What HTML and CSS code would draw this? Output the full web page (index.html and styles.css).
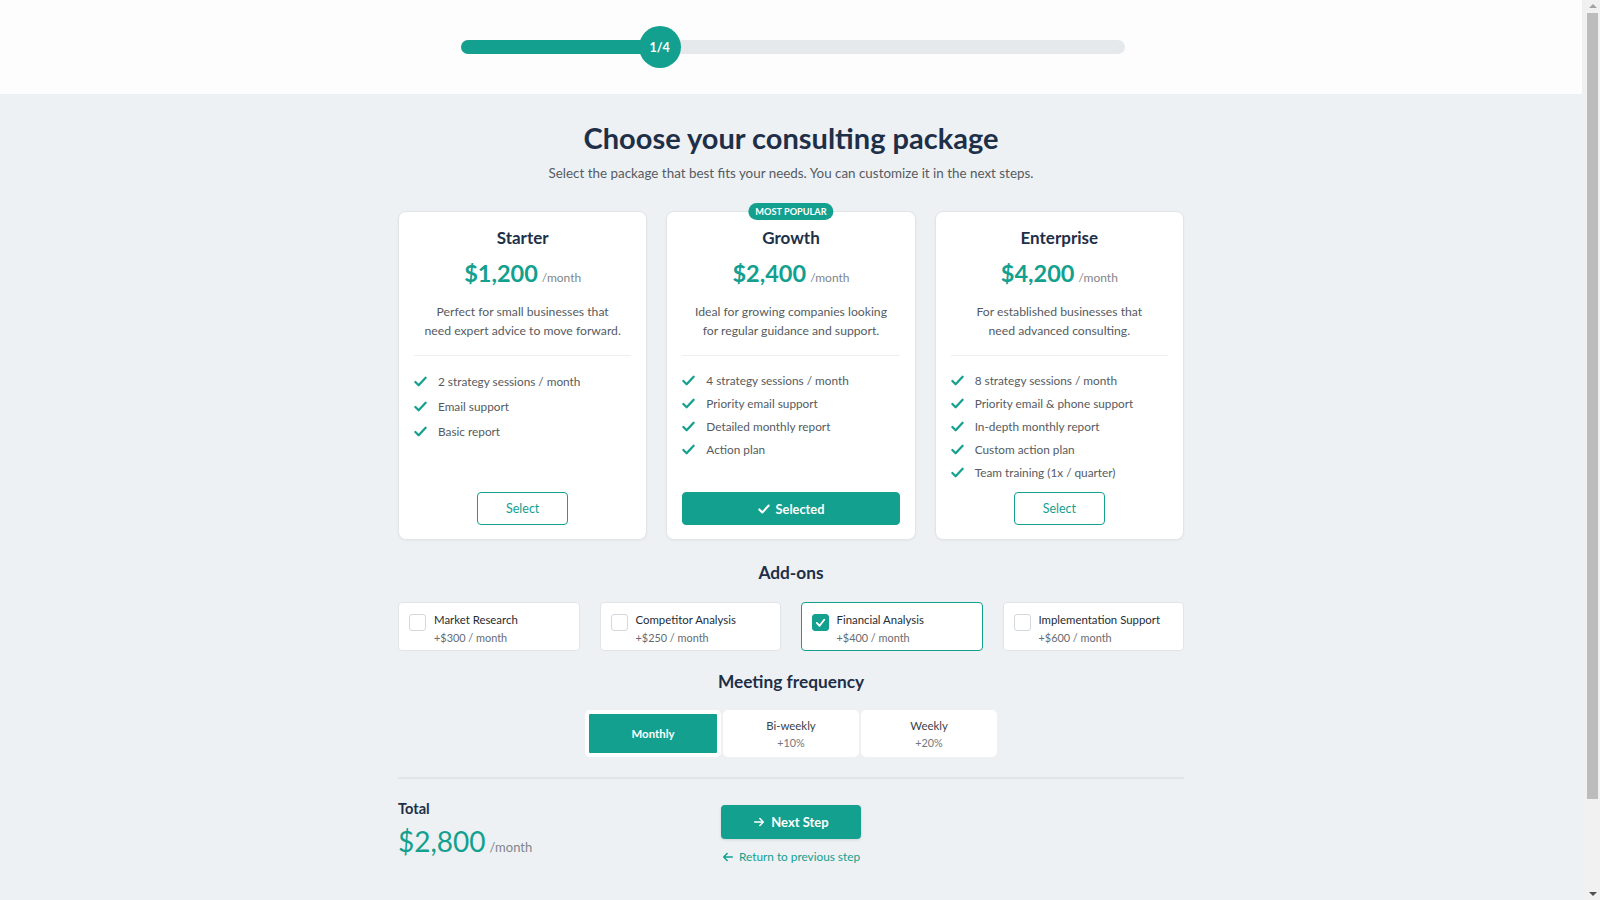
FILE: index.html
```html
<!DOCTYPE html>
<html lang="en">
<head>
    <meta charset="UTF-8">
    <meta name="viewport" content="width=device-width, initial-scale=1.0">
    <title>Choose your consulting package</title>
    <link rel="stylesheet" href="styles.css">
</head>
<body>
    <header class="topbar">
        <div class="progress">
            <div class="progress-fill" style="width: 30%"></div>
            <div class="progress-step" style="left: 30%">1/4</div>
        </div>
    </header>

    <main class="page">
        <div class="container">
            <h1 class="title">Choose your consulting package</h1>
            <p class="subtitle">Select the package that best fits your needs. You can customize it in the next steps.</p>

            <div class="plans">
                <div class="plan">
                    <h3 class="plan-name">Starter</h3>
                    <div class="plan-price">$1,200<span>/month</span></div>
                    <p class="plan-desc">Perfect for small businesses that<br>need expert advice to move forward.</p>
                    <ul class="features features-loose">
                        <li><svg viewBox="0 0 14 14"><polyline points="1.5,7.5 5,11 12.5,3"/></svg>2 strategy sessions / month</li>
                        <li><svg viewBox="0 0 14 14"><polyline points="1.5,7.5 5,11 12.5,3"/></svg>Email support</li>
                        <li><svg viewBox="0 0 14 14"><polyline points="1.5,7.5 5,11 12.5,3"/></svg>Basic report</li>
                    </ul>
                    <button class="plan-btn">Select</button>
                </div>

                <div class="plan plan-popular">
                    <span class="badge">Most popular</span>
                    <h3 class="plan-name">Growth</h3>
                    <div class="plan-price">$2,400<span>/month</span></div>
                    <p class="plan-desc">Ideal for growing companies looking<br>for regular guidance and support.</p>
                    <ul class="features">
                        <li><svg viewBox="0 0 14 14"><polyline points="1.5,7.5 5,11 12.5,3"/></svg>4 strategy sessions / month</li>
                        <li><svg viewBox="0 0 14 14"><polyline points="1.5,7.5 5,11 12.5,3"/></svg>Priority email support</li>
                        <li><svg viewBox="0 0 14 14"><polyline points="1.5,7.5 5,11 12.5,3"/></svg>Detailed monthly report</li>
                        <li><svg viewBox="0 0 14 14"><polyline points="1.5,7.5 5,11 12.5,3"/></svg>Action plan</li>
                    </ul>
                    <button class="plan-btn selected"><svg viewBox="0 0 14 14"><polyline points="1.5,7.5 5,11 12.5,3"/></svg>Selected</button>
                </div>

                <div class="plan">
                    <h3 class="plan-name">Enterprise</h3>
                    <div class="plan-price">$4,200<span>/month</span></div>
                    <p class="plan-desc">For established businesses that<br>need advanced consulting.</p>
                    <ul class="features">
                        <li><svg viewBox="0 0 14 14"><polyline points="1.5,7.5 5,11 12.5,3"/></svg>8 strategy sessions / month</li>
                        <li><svg viewBox="0 0 14 14"><polyline points="1.5,7.5 5,11 12.5,3"/></svg>Priority email &amp; phone support</li>
                        <li><svg viewBox="0 0 14 14"><polyline points="1.5,7.5 5,11 12.5,3"/></svg>In-depth monthly report</li>
                        <li><svg viewBox="0 0 14 14"><polyline points="1.5,7.5 5,11 12.5,3"/></svg>Custom action plan</li>
                        <li><svg viewBox="0 0 14 14"><polyline points="1.5,7.5 5,11 12.5,3"/></svg>Team training (1x / quarter)</li>
                    </ul>
                    <button class="plan-btn">Select</button>
                </div>
            </div>

            <h2 class="section-title">Add-ons</h2>
            <div class="addons">
                <label class="addon">
                    <span class="checkbox"></span>
                    <span class="addon-text"><strong>Market Research</strong><small>+$300 / month</small></span>
                </label>
                <label class="addon">
                    <span class="checkbox"></span>
                    <span class="addon-text"><strong>Competitor Analysis</strong><small>+$250 / month</small></span>
                </label>
                <label class="addon checked">
                    <span class="checkbox"><svg viewBox="0 0 14 14"><polyline points="3,7.5 6,10.5 11,4"/></svg></span>
                    <span class="addon-text"><strong>Financial Analysis</strong><small>+$400 / month</small></span>
                </label>
                <label class="addon">
                    <span class="checkbox"></span>
                    <span class="addon-text"><strong>Implementation Support</strong><small>+$600 / month</small></span>
                </label>
            </div>

            <h2 class="section-title">Meeting frequency</h2>
            <div class="frequency">
                <div class="segmented">
                    <button class="segment active">Monthly</button>
                    <button class="segment">Bi-weekly<small>+10%</small></button>
                    <button class="segment">Weekly<small>+20%</small></button>
                </div>
            </div>

            <div class="summary">
                <div class="total">
                    <div class="total-label">Total</div>
                    <div class="total-price">$2,800<span>/month</span></div>
                </div>
                <div class="actions">
                    <button class="next-btn"><svg viewBox="0 0 14 14"><path d="M2 7h10M8 3l4 4-4 4"/></svg>Next Step</button>
                    <a href="#" class="back-link"><svg viewBox="0 0 14 14"><path d="M12 7H2M6 3L2 7l4 4"/></svg>Return to previous step</a>
                </div>
                <div></div>
            </div>
        </div>
    </main>

    <!-- window scrollbar, drawn because the headless view hides it -->
    <div class="scrollbar">
        <span class="scroll-arrow up"></span>
        <div class="scroll-thumb"></div>
        <span class="scroll-arrow down"></span>
    </div>
</body>
</html>
```

FILE: styles.css
```css
html {
    background: #eef1f4;
}

body {
    font-family: 'Lato', 'Open Sans', sans-serif;
    margin: 0 18px 0 0;
    background: #eef1f4;
    color: #333;
}

/* fake window scrollbar */
.scrollbar {
    position: fixed;
    top: 0;
    right: 0;
    bottom: 0;
    width: 15px;
    background: #f1f1f1;
    display: flex;
    flex-direction: column;
    align-items: center;
}

.scroll-arrow {
    width: 0;
    height: 0;
    margin: 4px 0;
    border-left: 4px solid transparent;
    border-right: 4px solid transparent;
}

.scroll-arrow.up {
    border-bottom: 4px solid #a3a3a3;
}

.scroll-arrow.down {
    margin-top: auto;
    border-top: 4px solid #505050;
}

.scroll-thumb {
    width: 11px;
    height: 786px;
    margin-top: 1px;
    background: #bcbcbc;
}

/* top progress */
.topbar {
    height: 94px;
    margin-right: -3px;
    background: #fdfdfe;
    display: flex;
    justify-content: center;
    align-items: center;
}

.progress {
    position: relative;
    width: 664px;
    height: 14px;
    border-radius: 7px;
    background: #e6e9ec;
}

.progress-fill {
    height: 100%;
    border-radius: 7px;
    background: #13a08f;
}

.progress-step {
    position: absolute;
    top: 50%;
    width: 42px;
    height: 42px;
    border-radius: 50%;
    background: #13a08f;
    color: #fff;
    font-size: 12.5px;
    font-weight: 700;
    display: flex;
    align-items: center;
    justify-content: center;
    transform: translate(-50%, -50%);
}

.page {
    padding: 26px 0 135px;
}

.container {
    width: 786px;
    margin: 0 auto;
}

.title {
    margin: 0;
    font-size: 29px;
    line-height: 36px;
    font-weight: 700;
    text-align: center;
    color: #1e2f48;
}

.subtitle {
    margin: 7px 0 0;
    font-size: 13.4px;
    line-height: 20px;
    text-align: center;
    color: #555b61;
}

/* plans */
.plans {
    display: grid;
    grid-template-columns: repeat(3, 1fr);
    gap: 19px;
    margin-top: 28px;
}

.plan {
    position: relative;
    display: flex;
    flex-direction: column;
    background: #fff;
    border: 1px solid #e1e5e9;
    border-radius: 8px;
    padding: 14px 15px 14px;
    box-shadow: 0 1px 3px rgba(0, 0, 0, 0.04);
    text-align: center;
}

.badge {
    position: absolute;
    top: -9px;
    left: 50%;
    transform: translateX(-50%);
    height: 17px;
    line-height: 17px;
    padding: 0 7px;
    border-radius: 9px;
    background: #13a08f;
    color: #fff;
    font-size: 9.2px;
    font-weight: 700;
    text-transform: uppercase;
    white-space: nowrap;
}

.plan-name {
    margin: 0;
    font-size: 17px;
    line-height: 24px;
    font-weight: 700;
    color: #1e2f48;
}

.plan-price {
    margin-top: 8px;
    font-size: 23.5px;
    line-height: 30px;
    font-weight: 700;
    color: #13a08f;
}

.plan-price span,
.total-price span {
    margin-left: 4px;
    font-size: 12px;
    font-weight: 400;
    color: #80868c;
}

.plan-desc {
    margin: 10px 0 0;
    padding-bottom: 15px;
    border-bottom: 1px solid #eceff1;
    font-size: 12.2px;
    line-height: 18.5px;
    color: #555b61;
}

.features {
    list-style: none;
    margin: 13px 0 8px;
    padding: 0;
    text-align: left;
}

.features li {
    display: flex;
    align-items: center;
    gap: 11px;
    height: 23px;
    font-size: 11.8px;
    color: #555b61;
}

.features-loose li {
    height: 25px;
}

.features svg,
.plan-btn svg {
    width: 13px;
    height: 13px;
    fill: none;
    stroke: #13a08f;
    stroke-width: 2.4;
    stroke-linecap: round;
    stroke-linejoin: round;
    flex-shrink: 0;
}

.plan-btn {
    margin-top: auto;
    align-self: center;
    height: 33px;
    padding: 0 28px;
    border: 1.5px solid #13a08f;
    border-radius: 4px;
    background: #fff;
    color: #13a08f;
    font-family: inherit;
    font-size: 12.5px;
    cursor: pointer;
}

.plan-btn.selected {
    align-self: stretch;
    display: flex;
    align-items: center;
    justify-content: center;
    gap: 6px;
    background: #13a08f;
    color: #fff;
    font-size: 12.8px;
    font-weight: 700;
}

.plan-btn.selected svg {
    stroke: #fff;
    width: 12px;
    height: 12px;
}

/* add-ons */
.section-title {
    margin: 21px 0 0;
    font-size: 17.3px;
    line-height: 24px;
    font-weight: 700;
    text-align: center;
    color: #1e2f48;
}

.addons + .section-title {
    margin-top: 19px;
}

.addons {
    display: grid;
    grid-template-columns: repeat(4, 1fr);
    gap: 20px;
    margin-top: 17px;
}

.addon {
    display: flex;
    align-items: flex-start;
    gap: 8px;
    height: 49px;
    box-sizing: border-box;
    padding: 8px 10px 0;
    background: #fff;
    border: 1px solid #e1e5e9;
    border-radius: 4px;
    cursor: pointer;
}

.addon.checked {
    border: 1.5px solid #13a08f;
    padding: 7.5px 9.5px 0;
}

.checkbox {
    width: 17px;
    height: 17px;
    margin-top: 3px;
    box-sizing: border-box;
    border: 1.5px solid #d3d8dd;
    border-radius: 3px;
    background: #fff;
    flex-shrink: 0;
    display: flex;
    align-items: center;
    justify-content: center;
}

.addon.checked .checkbox {
    border-color: #13a08f;
    background: #13a08f;
}

.checkbox svg {
    width: 13px;
    height: 13px;
    fill: none;
    stroke: #fff;
    stroke-width: 2;
    stroke-linecap: round;
    stroke-linejoin: round;
}

.addon-text strong {
    display: block;
    font-size: 11.4px;
    line-height: 17px;
    font-weight: 400;
    color: #252c33;
}

.addon-text small {
    display: block;
    margin-top: 1px;
    font-size: 10.9px;
    line-height: 17px;
    color: #666c72;
}

/* frequency */
.frequency {
    display: flex;
    justify-content: center;
    margin-top: 16px;
}

.segmented {
    display: flex;
    gap: 2px;
    border-radius: 5px;
    background: #eef1f4;
}

.segment {
    width: 136px;
    height: 47px;
    border: 4px solid #fff;
    border-radius: 5px;
    background: #fff;
    color: #3c434a;
    font-family: inherit;
    font-size: 11.4px;
    line-height: 17px;
    cursor: pointer;
}

.segment small {
    display: block;
    font-size: 10.8px;
    color: #71777d;
}

.segment.active {
    background: #13a08f;
    color: #fff;
    font-weight: 700;
}

/* summary */
.summary {
    display: grid;
    grid-template-columns: 1fr auto 1fr;
    margin-top: 20px;
    padding-top: 21px;
    border-top: 2px solid #e1e5e9;
}

.total-label {
    font-size: 14.6px;
    line-height: 18px;
    font-weight: 700;
    color: #1e2f48;
}

.total-price {
    margin-top: 5px;
    font-size: 28px;
    line-height: 36px;
    color: #13a08f;
}

.total-price span {
    font-size: 13px;
}

.actions {
    display: flex;
    flex-direction: column;
    align-items: center;
    padding-top: 5px;
}

.next-btn {
    display: flex;
    align-items: center;
    justify-content: center;
    gap: 6px;
    width: 140px;
    height: 34px;
    border: none;
    border-radius: 4px;
    background: #13a08f;
    color: #fff;
    font-family: inherit;
    font-size: 13px;
    font-weight: 700;
    box-shadow: 0 1px 3px rgba(0, 0, 0, 0.12);
    cursor: pointer;
}

.next-btn svg,
.back-link svg {
    width: 12px;
    height: 12px;
    fill: none;
    stroke: currentColor;
    stroke-width: 1.8;
    stroke-linecap: round;
    stroke-linejoin: round;
}

.back-link {
    display: flex;
    align-items: center;
    gap: 5px;
    margin-top: 10px;
    font-size: 11.8px;
    line-height: 16px;
    color: #13a08f;
    text-decoration: none;
}
```
